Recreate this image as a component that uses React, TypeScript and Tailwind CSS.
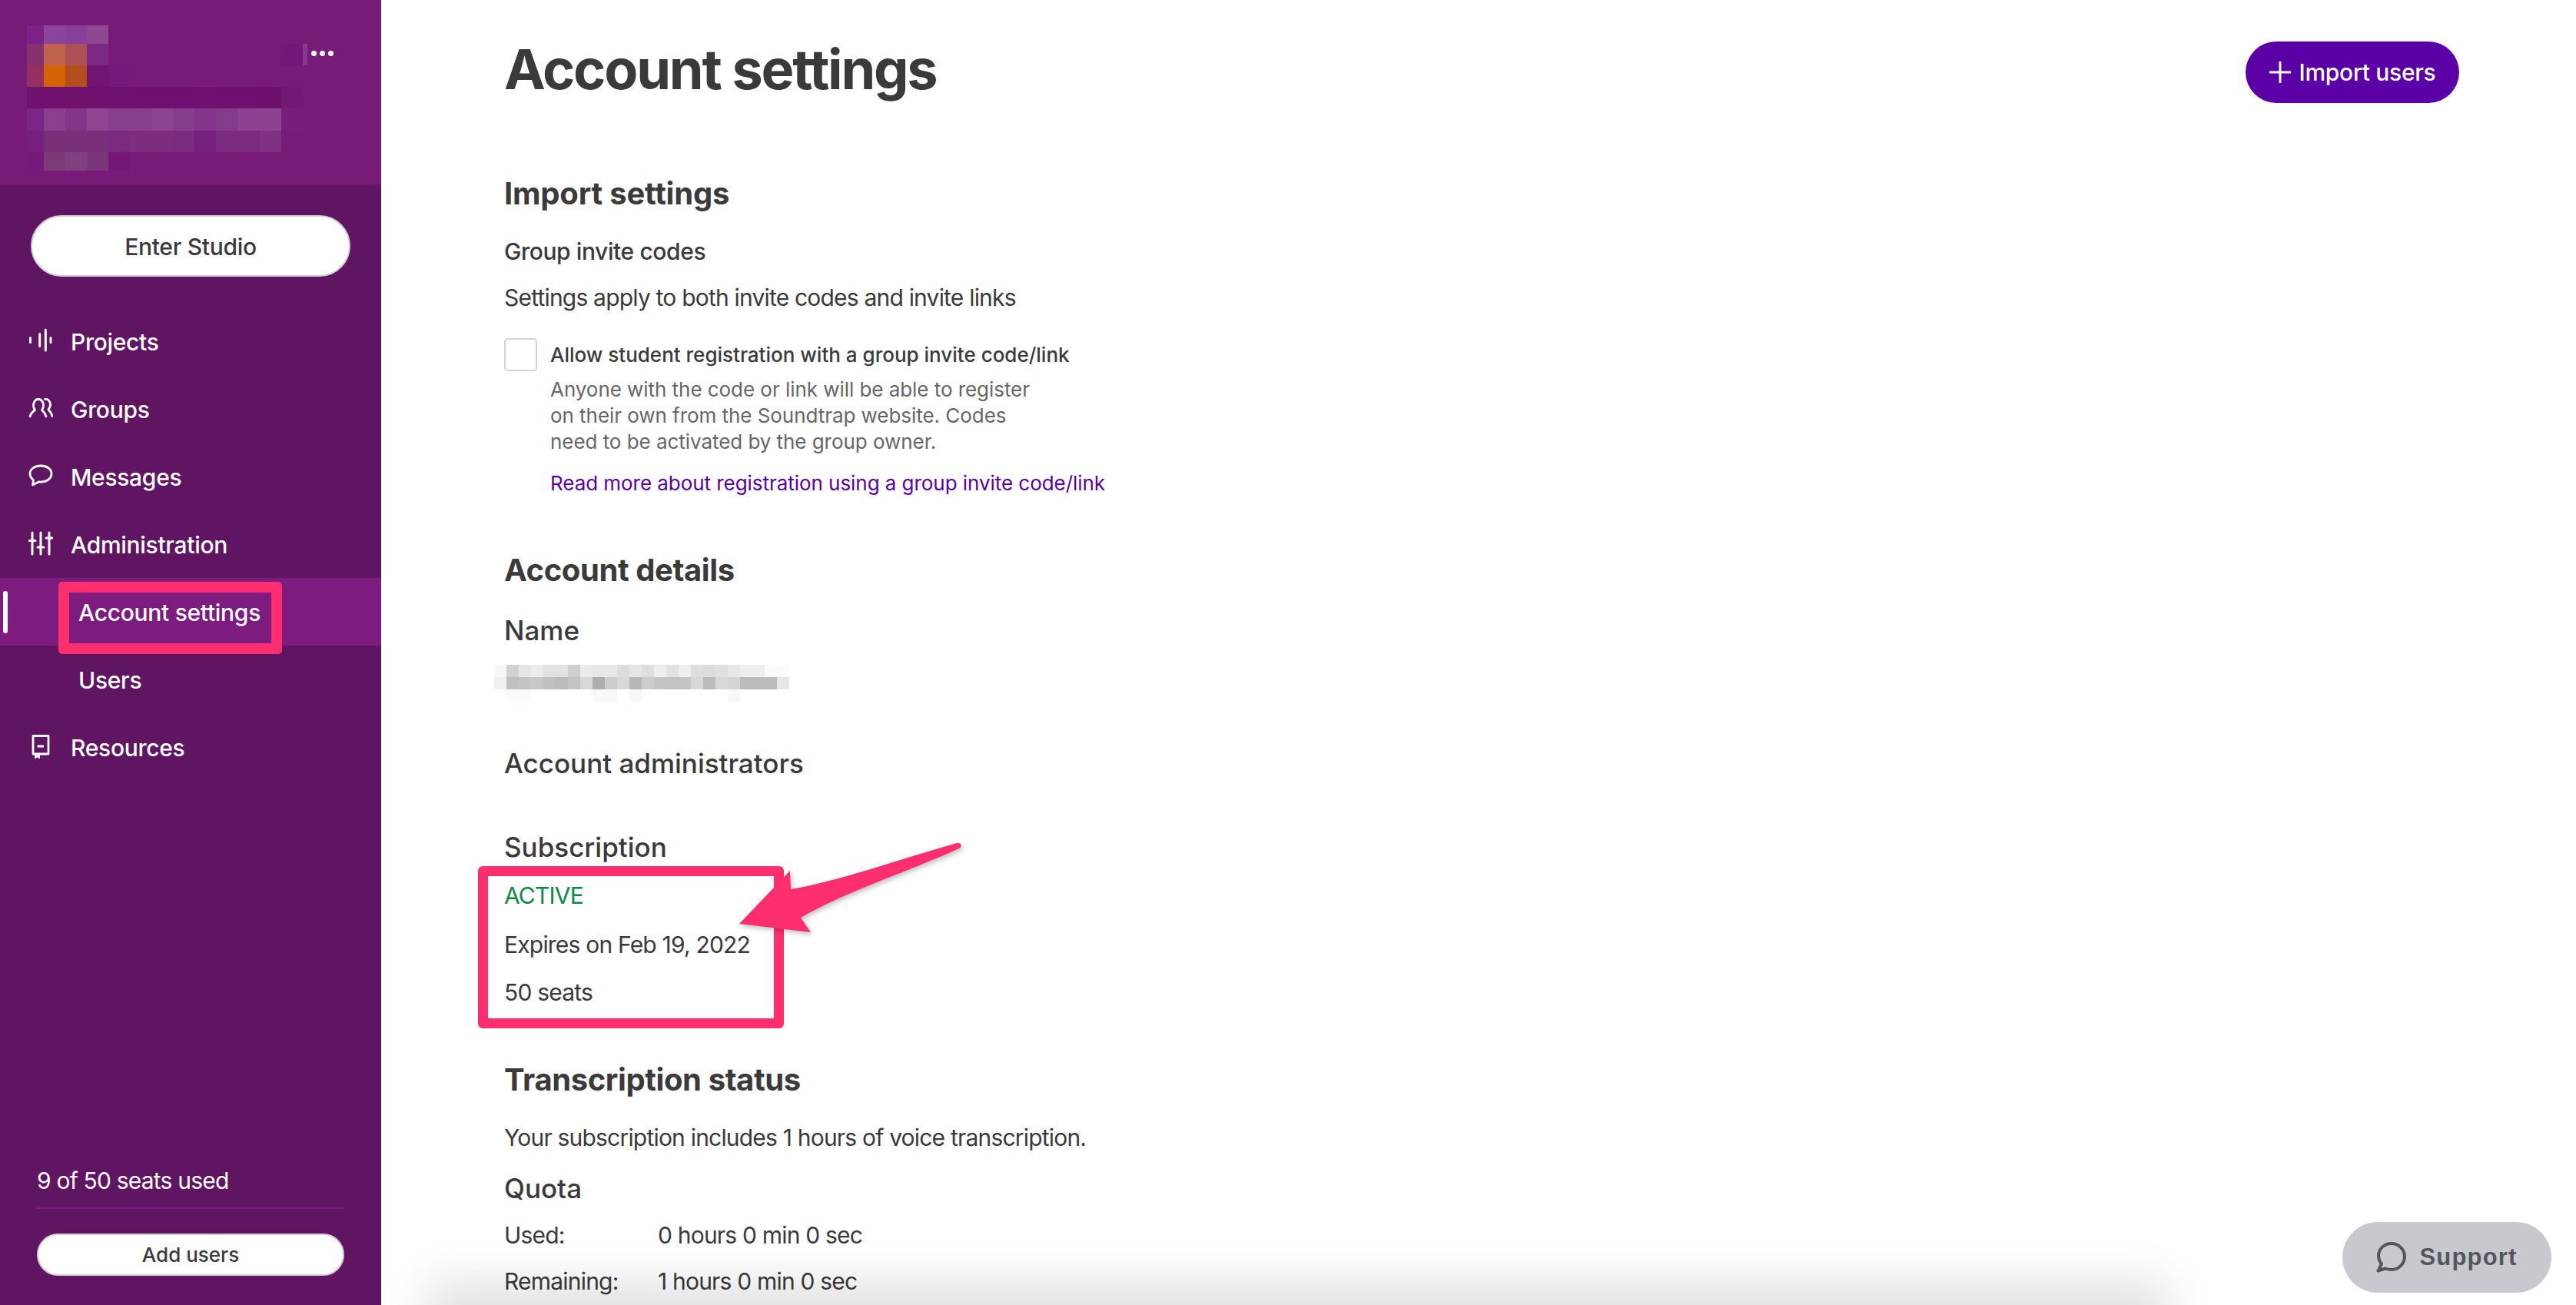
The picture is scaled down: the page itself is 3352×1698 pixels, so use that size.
import React from 'react';

const LOGO_COLS = [35, 57, 85, 113, 141, 169, 197, 225, 253, 281, 310, 338, 366, 394, 400];
const LOGO_ROWS = [33, 57, 85, 113, 141, 170, 198, 222];
const LOGO_CELLS = [
  ['#7a2285', '#8a459e', '#87409a', '#8f4890'],
  ['#89306e', '#bf634e', '#ad5058', '#7d2882', '', '', '', '', '', '', '', '', '#741776', '#8a3a8c'],
  ['#96305f', '#d36304', '#b54e1f', '#721570', '#75197a'],
  ['#70106f', '#70106f', '#70106f', '#70106f', '#70106f', '#700f70', '#700f70', '#700f70', '#71116f', '#700f70', '#700f70', '#6e0f6e', '#741875'],
  ['#7a2686', '#8a3f90', '#833589', '#8f4594', '#87408c', '#87408c', '#8b4490', '#863e8c', '#82358a', '#853b8c', '#8c4290', '#8c4290', '#781e7a'],
  ['#771f7f', '#7a3078', '#7a2f7a', '#782e78', '#7b2a80', '#7c2d80', '#7c2d80', '#7b2c80', '#771f7c', '#7a2a80', '#7c2a80', '#7e3084', '#751b78'],
  ['#751a78', '#7c3a78', '#804080', '#7a3678', '#741776'],
];

const NAME_ROWS = [
  ['#f8f8f8', '#d2d2d2', '#e6e6e6', '#ececec', '#e2e2e2', '#e2e2e2', '#d0d0d0', '#ebebeb', '#e8e8e8', '#e8e8e8', '#dcdcdc', '#e6e6e6', '#dedede', '#eeeeee', '#e2e2e2', '#eeeeee', '#dedede', '#dcdcdc', '#e0e0e0', '#e8e8e8', '#eeeeee', '#eeeeee', '#fafafa', '#fcfcfc'],
  ['#f0f0f0', '#c0c0c0', '#c4c4c4', '#c8c8c8', '#c0c0c0', '#bcbcbc', '#c4c4c4', '#d8d8d8', '#aeaeae', '#cccccc', '#d8d8d8', '#b8b8b8', '#cccccc', '#c4c4c4', '#c4c4c4', '#c4c4c4', '#d8d8d8', '#bcbcbc', '#d8d8d8', '#d4d4d4', '#bcbcbc', '#bcbcbc', '#bcbcbc', '#e6e6e6'],
  ['#ffffff', '#fafafa', '#fafafa', '#ffffff', '#ffffff', '#ffffff', '#ffffff', '#ffffff', '#f8f8f8', '#f8f8f8', '#ffffff', '#f8f8f8', '#ffffff', '#ffffff', '#ffffff', '#ffffff', '#ffffff', '#ffffff', '#ffffff', '#f8f8f8', '#ffffff', '#ffffff', '#ffffff', '#ffffff'],
];

function LogoMosaic() {
  return (
    <svg width="496" height="240" className="absolute top-0 left-0">
      {LOGO_CELLS.map((row, y) =>
        row.map((fill, x) =>
          fill ? (
            <rect
              key={`${x}-${y}`}
              x={LOGO_COLS[x]}
              y={LOGO_ROWS[y]}
              width={LOGO_COLS[x + 1] - LOGO_COLS[x]}
              height={LOGO_ROWS[y + 1] - LOGO_ROWS[y]}
              fill={fill}
            />
          ) : null,
        ),
      )}
    </svg>
  );
}

function NameMosaic() {
  return (
    <svg width="384" height="48" className="block">
      {NAME_ROWS.map((row, y) =>
        row.map((fill, x) => <rect key={`${x}-${y}`} x={x * 16} y={y * 16} width="16" height="16" fill={fill} />),
      )}
    </svg>
  );
}

function WaveIcon() {
  return (
    <svg width="32" height="32" viewBox="0 0 32 32" fill="none" stroke="white" strokeWidth="3" strokeLinecap="round">
      <path d="M2.500 12.500v6M14.700 7.500v16M22.300 2v27M29 12.500v6" />
    </svg>
  );
}

function GroupIcon() {
  return (
    <svg width="32" height="32" viewBox="0 0 32 32" fill="none" stroke="white" strokeWidth="2.800" strokeLinecap="round" strokeLinejoin="round">
      <path d="M2 27c1-3.500 3-6 6.500-8.500C4.500 13 7 4.500 13 4.500s8.500 8.500 4.500 14C20.500 21 22 23.500 23 27" />
      <path d="M21.500 4.500C27.500 4 31 11 26 18c2.500 2.500 4 5 5 8.500" />
    </svg>
  );
}

function MessageIcon() {
  return (
    <svg width="32" height="32" viewBox="0 0 32 32" fill="none" stroke="white" strokeWidth="2.800" strokeLinecap="round" strokeLinejoin="round">
      <path d="M16 3C8 3 2 7.500 2 13.500c0 3.500 1.800 6 4.500 8L5.500 28l8-4c.8.100 1.700.100 2.500.100 8 0 14-4.500 14-10.600S24 3 16 3z" />
    </svg>
  );
}

function SlidersIcon() {
  return (
    <svg width="32" height="32" viewBox="0 0 32 32" fill="none" stroke="white" strokeWidth="3" strokeLinecap="round">
      <path d="M5 2v28M16 2v28M27 2v28M1 12.500h8M12 21h8M23 9h8" />
    </svg>
  );
}

function BookIcon() {
  return (
    <svg width="32" height="32" viewBox="0 0 32 32" fill="none" stroke="white" strokeWidth="2.800" strokeLinejoin="round">
      <path d="M6 2.500h20v23.500H6z" />
      <path d="M11.500 16h8.500" strokeWidth="3" />
      <path d="M9 26v5l2.500-2 2.500 2v-5" strokeWidth="2" fill="white" />
    </svg>
  );
}

function NavRow({ icon, label, active, child }: { icon?: React.ReactNode; label: string; active?: boolean; child?: boolean }) {
  return (
    <div className={`relative flex h-[88px] items-center ${active ? 'bg-[#7e1b7e]' : ''}`}>
      {active && <div className="absolute left-[4px] top-[17px] h-[55px] w-[6px] rounded-full bg-white" />}
      {child ? (
        <span className="ml-[102px] pt-[2px]">{label}</span>
      ) : (
        <>
          <span className="ml-[37px] flex w-[55px] -translate-y-[1px]">{icon}</span>
          <span className="pt-[2px]">{label}</span>
        </>
      )}
    </div>
  );
}

function Sidebar() {
  return (
    <aside className="flex h-full w-[496px] shrink-0 flex-col bg-[#5f1562] text-[30px] font-medium leading-[40px] tracking-[-0.3px] text-white">
      <div className="relative h-[240px] bg-[#771a78]">
        <LogoMosaic />
        <div className="absolute top-[66px] left-[405px] flex gap-[4px]">
          <span className="h-[7px] w-[7px] rounded-full bg-white" />
          <span className="h-[7px] w-[7px] rounded-full bg-white" />
          <span className="h-[7px] w-[7px] rounded-full bg-white" />
        </div>
      </div>
      <button className="mx-[40px] mt-[40px] h-[80px] rounded-full border-[2px] border-[#d0d0d0] bg-white pt-[2px] text-[#3a3a3a]">Enter Studio</button>
      <nav className="mt-[40px]">
        <NavRow icon={<WaveIcon />} label="Projects" />
        <NavRow icon={<GroupIcon />} label="Groups" />
        <NavRow icon={<MessageIcon />} label="Messages" />
        <NavRow icon={<SlidersIcon />} label="Administration" />
        <NavRow child active label="Account settings" />
        <NavRow child label="Users" />
        <NavRow icon={<BookIcon />} label="Resources" />
      </nav>
      <div className="mx-[48px] mt-auto mb-[38px]">
        <div className="border-b-2 border-[#801b84] pb-[15px] font-normal tracking-[-0.8px]">9 of 50 seats used</div>
        <button className="mt-[32px] block h-[55px] w-full rounded-full border-[2px] border-[#d0d0d0] bg-white text-[26px] tracking-[0px] text-[#3a3a3a]">Add users</button>
      </div>
    </aside>
  );
}

function Main() {
  return (
    <main className="relative h-full flex-1 overflow-hidden bg-white pt-[54px] pr-[152px] pl-[160px] text-[30px] leading-[40px] tracking-[-0.8px] text-[#3a3a3a]">
      <div className="flex items-start justify-between">
        <h1 className="text-[72px] font-bold leading-[72px] tracking-[-2.2px]">Account settings</h1>
        <button className="flex h-[80px] w-[278px] items-center justify-center gap-[11px] rounded-full bg-[#5a00a6] font-medium tracking-[-0.3px] text-white">
          <svg width="28" height="28" viewBox="0 0 28 28" stroke="white" strokeWidth="3" strokeLinecap="round">
            <path d="M14 1v26M1 14h26" />
          </svg>
          Import users
        </button>
      </div>

      <h2 className="mt-[94px] text-[40px] font-bold leading-[48px] tracking-[-0.2px]">Import settings</h2>
      <p className="mt-[31px] font-medium tracking-[-0.4px]">Group invite codes</p>
      <p className="mt-[20px]">Settings apply to both invite codes and invite links</p>

      <div className="mt-[33px] flex gap-[17px]">
        <div className="h-[43px] w-[43px] shrink-0 rounded-[5px] border-2 border-[#d4d4d4] bg-white" />
        <div className="pt-[2px] text-[26px] tracking-[-0.05px]">
          <p className="font-medium leading-[40px] tracking-[0px]">Allow student registration with a group invite code/link</p>
          <p className="mt-[8px] leading-[34px] text-[#666666]">
            Anyone with the code or link will be able to register
            <br />
            on their own from the Soundtrap website. Codes
            <br />
            need to be activated by the group owner.
          </p>
          <a className="mt-[17px] block leading-[40px] text-[#5a00a6]">Read more about registration using a group invite code/link</a>
        </div>
      </div>

      <h2 className="mt-[69px] text-[40px] font-bold leading-[48px] tracking-[-0.4px]">Account details</h2>
      <h3 className="mt-[33px] text-[35px] font-medium leading-[42px] tracking-[0px]">Name</h3>
      <div className="mt-[24px] -ml-[13px]">
        <NameMosaic />
      </div>
      <h3 className="mt-[59px] text-[35px] font-medium leading-[42px] tracking-[0px]">Account administrators</h3>
      <h3 className="mt-[67px] text-[35px] font-medium leading-[42px] tracking-[0px]">Subscription</h3>
      <p className="mt-[22px] text-[#0a8a45]">ACTIVE</p>
      <p className="mt-[24px]">Expires on Feb 19, 2022</p>
      <p className="mt-[22px]">50 seats</p>

      <h2 className="mt-[70px] text-[40px] font-bold leading-[48px] tracking-[-0.4px]">Transcription status</h2>
      <p className="mt-[31px]">Your subscription includes 1 hours of voice transcription.</p>
      <h3 className="mt-[25px] text-[35px] font-medium leading-[42px] tracking-[0px]">Quota</h3>
      <div className="mt-[20px] grid grid-cols-[200px_auto] justify-start gap-y-[20px]">
        <span>Used:</span>
        <span>0 hours 0 min 0 sec</span>
        <span>Remaining:</span>
        <span>1 hours 0 min 0 sec</span>
      </div>

      {/* bottom scroll shadow */}
      <div className="absolute bottom-[-20px] left-[90px] right-[560px] h-[20px] shadow-[0_0_60px_30px_rgba(0,0,0,0.12)]" />
    </main>
  );
}

export default function App() {
  return (
    <div className="relative flex h-[1698px] w-[3352px] overflow-hidden font-['Inter',sans-serif]">
      <Sidebar />
      <Main />

      {/* annotation highlights */}
      <div className="absolute top-[757px] left-[76px] h-[94px] w-[291px] rounded-[5px] border-[14px] border-[#ff2e6e]" />
      <div className="absolute top-[1127px] left-[622px] h-[211px] w-[398px] rounded-[6px] border-[13px] border-[#ff2e6e]" />
      <svg width="3352" height="1698" className="pointer-events-none absolute top-0 left-0">
        <path
          className="drop-shadow-[2px_3px_3px_rgba(0,0,0,0.25)]"
          d="M962 1202 L1028 1133 L1029 1157 C1090 1147 1170 1118 1245 1097 Q1252 1096 1250 1103 C1180 1135 1100 1160 1042 1194 L1055 1213 Z"
          fill="#ff2e6e"
        />
      </svg>

      {/* floating support button */}
      <button className="absolute top-[1590px] left-[3048px] flex h-[92px] w-[272px] items-center justify-center gap-[16px] rounded-full bg-[#c8c9ce] font-['Liberation_Sans',sans-serif] text-[31px] font-bold tracking-[1.2px] text-[#55565c]">
        <svg width="40" height="42" viewBox="0 0 40 42" fill="none" stroke="#55565c" strokeWidth="4" strokeLinejoin="round" strokeLinecap="round">
          <path d="M20 3C10.500 3 3 10 3 19c0 4 1.500 7.500 4 10.500L2.500 38.500l9.500-3c2.500 1 5 1.500 8 1.500 9.500 0 17-8 17-17S29.500 3 20 3z" />
        </svg>
        Support
      </button>
    </div>
  );
}
